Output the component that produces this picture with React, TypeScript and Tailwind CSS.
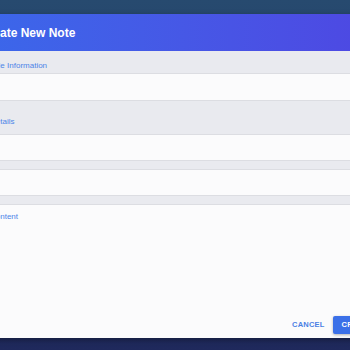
const font = { fontFamily: '"Liberation Sans", Arial, sans-serif' };

const SectionLabel = ({ text, className }: { text: string; className?: string }) => (
  <div className={`pl-[20px] text-[8px] leading-[10px] text-[#4c84e8] ${className ?? ""}`}>{text}</div>
);

const Field = () => <div className="h-[27px] border-y border-[#dcdde2] bg-[#fbfbfc]" />;

export default function App() {
  return (
    <div
      className="h-[350px] w-[350px] overflow-hidden bg-gradient-to-b from-[#274a6f] to-[#1f295c] pt-[14px]"
      style={font}
    >
      <div className="ml-[-30px] w-[424px] bg-[#e9eaef] shadow-[0_2px_6px_rgba(0,0,0,0.35)]">
        <div className="flex h-[37px] items-center bg-gradient-to-r from-[#3a68ea] to-[#4e46e2] pl-[10px]">
          <span className="text-[12px] font-semibold text-white">Create New Note</span>
        </div>

        <div className="h-[22px] pt-[10px]">
          <SectionLabel text="Title Information" />
        </div>
        <div className="h-[28px] border-y border-[#dcdde2] bg-[#fbfbfc]" />

        <div className="h-[33px] pt-[16px]">
          <SectionLabel text="Details" />
        </div>
        <Field />
        <div className="h-[8px]" />
        <Field />
        <div className="h-[8px]" />

        <div className="flex h-[134px] flex-col border-t border-[#dcdde2] bg-[#fbfbfc]">
          <SectionLabel text="Content" className="pt-[7px]" />
          <div className="flex-1" />
          <div className="flex items-center justify-end gap-[8px] pb-[4px] pr-[12px]">
            <button className="text-[7.5px] font-semibold tracking-[0.2px] text-[#4a80e4]">CANCEL</button>
            <button className="h-[18px] rounded-[2px] bg-[#3b70e8] px-[9px] text-[7.5px] font-semibold tracking-[0.2px] text-white shadow-[0_1px_3px_rgba(0,0,0,0.3)]">
              CREATE
            </button>
          </div>
        </div>
      </div>
    </div>
  );
}
